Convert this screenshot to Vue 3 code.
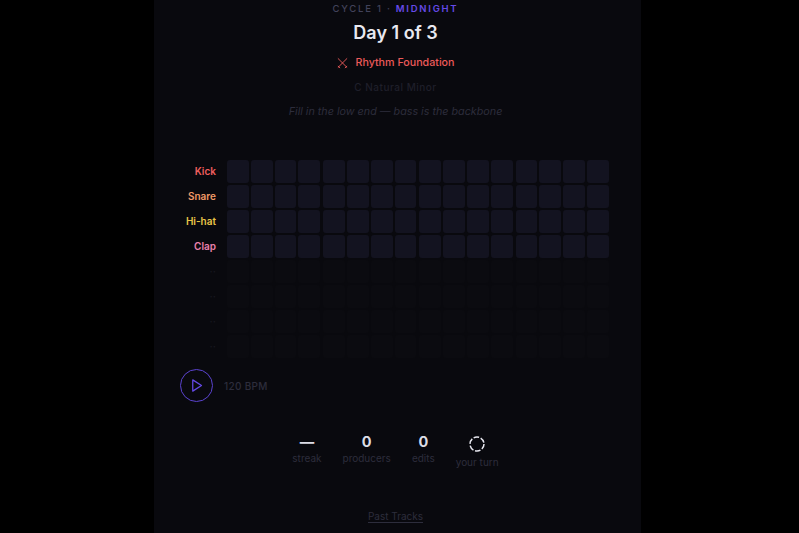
<script setup>
const steps = Array.from({ length: 16 }, (_, i) => i);

const tracks = [
  { name: 'Kick', color: '#ef5f5f', active: true },
  { name: 'Snare', color: '#ef9866', active: true },
  { name: 'Hi-hat', color: '#e8c548', active: true },
  { name: 'Clap', color: '#ea80ac', active: true },
  { name: '··', color: '#17171f', active: false },
  { name: '··', color: '#17171f', active: false },
  { name: '··', color: '#17171f', active: false },
  { name: '··', color: '#17171f', active: false }
];

const stats = [
  { value: '—', label: 'streak' },
  { value: '0', label: 'producers' },
  { value: '0', label: 'edits' }
];
</script>

<template>
  <div class="page">
    <main class="column">
      <!-- Header -->
      <div class="cycle">CYCLE 1 · <span class="cycle-name">MIDNIGHT</span></div>
      <h1 class="day">Day 1 of 3</h1>
      <div class="phase">
        <svg class="phase-icon" viewBox="0 0 24 24" fill="none" stroke="currentColor" stroke-linecap="round" stroke-linejoin="round">
          <path d="M4 3 L20 19" />
          <path d="M20 3 L4 19" />
          <path d="M17 20 L20 17" />
          <path d="M4 17 L7 20" />
        </svg>
        <span>Rhythm Foundation</span>
      </div>
      <div class="scale">C Natural Minor</div>
      <div class="hint">Fill in the low end — bass is the backbone</div>

      <!-- Sequencer -->
      <div class="sequencer">
        <div v-for="(track, r) in tracks" :key="r" :class="['track', { 'is-locked': !track.active }]">
          <span class="track-label" :style="{ color: track.color }">{{ track.name }}</span>
          <div class="cells">
            <div v-for="s in steps" :key="s" :class="['cell', { 'bar-start': s > 0 && s % 4 === 0 }]"></div>
          </div>
        </div>
      </div>

      <!-- Transport -->
      <div class="transport">
        <button class="play-btn">
          <svg class="play-icon" viewBox="0 0 24 24" fill="none" stroke="currentColor" stroke-width="2" stroke-linejoin="round">
            <path d="M6 3 L20 12 L6 21 Z" />
          </svg>
        </button>
        <span class="bpm">120 BPM</span>
      </div>

      <!-- Stats -->
      <div class="stats">
        <div v-for="stat in stats" :key="stat.label" class="stat">
          <span class="stat-value">{{ stat.value }}</span>
          <span class="stat-label">{{ stat.label }}</span>
        </div>
        <div class="stat">
          <svg class="turn-ring" viewBox="0 0 16 16" fill="none" stroke="currentColor" stroke-width="1.5">
            <circle cx="8" cy="8" r="7" stroke-dasharray="5.6 1.73" />
          </svg>
          <span class="stat-label">your turn</span>
        </div>
      </div>

      <a class="past-tracks">Past Tracks</a>
    </main>
  </div>
</template>

<style>
html, body {
  margin: 0;
  background: #000;
}
</style>

<style scoped>
.page {
  height: 533px;
  overflow: hidden;
  background: #000;
  font-family: Inter, "Liberation Sans", sans-serif;
}

.column {
  width: 487px;
  height: 533px;
  margin-left: 154px;
  padding-right: 4px;
  background: #09090e;
  display: flex;
  flex-direction: column;
  align-items: center;
  box-sizing: border-box;
}

.cycle {
  margin-top: 3px;
  font-size: 9.5px;
  line-height: 12px;
  font-weight: 500;
  letter-spacing: 1.75px;
  color: #42425a;
}

.cycle-name {
  color: #6549e8;
  font-weight: 600;
}

.day {
  margin: 6px 0 0;
  font-size: 18px;
  line-height: 24px;
  font-weight: 600;
  color: #e8e8f0;
}

.phase {
  margin-top: 11px;
  display: flex;
  align-items: center;
  gap: 6px;
  font-size: 10.7px;
  line-height: 14px;
  font-weight: 500;
  color: #ec5a5a;
}

.phase-icon {
  width: 13px;
  height: 13px;
  stroke-width: 1.7;
}

.scale {
  margin-top: 11px;
  font-size: 10px;
  line-height: 12px;
  font-weight: 500;
  letter-spacing: 0.5px;
  color: #1f1f2a;
}

.hint {
  margin-top: 12px;
  font-size: 10.75px;
  line-height: 14px;
  font-style: italic;
  color: #2d2d3c;
}

.sequencer {
  align-self: flex-start;
  margin-top: 41px;
  display: flex;
  flex-direction: column;
  gap: 2px;
}

.track {
  display: flex;
  align-items: center;
  gap: 11px;
}

.track-label {
  width: 62px;
  padding-bottom: 2px;
  text-align: right;
  font-size: 10px;
  font-weight: 600;
}

.cells {
  display: flex;
  gap: 2px;
}

.cell {
  width: 21.8px;
  height: 23px;
  border-radius: 3px;
  background: #131320;
}

.bar-start {
  margin-left: 1px;
}

.is-locked .cell {
  background: #0b0b10;
}

.transport {
  align-self: flex-start;
  margin: 11px 0 0 26px;
  display: flex;
  align-items: center;
  gap: 11px;
}

.play-btn {
  width: 33px;
  height: 33px;
  padding: 0;
  border: 1px solid #5b43cf;
  border-radius: 50%;
  background: transparent;
  color: #6549e8;
  display: flex;
  align-items: center;
  justify-content: center;
}

.play-icon {
  width: 15px;
  height: 15px;
}

.bpm {
  font-size: 10px;
  font-weight: 500;
  letter-spacing: 0.3px;
  color: #2d2d3c;
}

.stats {
  margin-top: 31px;
  display: flex;
  align-items: flex-start;
  gap: 21px;
}

.stat {
  display: flex;
  flex-direction: column;
  align-items: center;
}

.stat-value {
  font-size: 14.5px;
  line-height: 18px;
  font-weight: 700;
  color: #dcdce6;
}

.stat-label {
  margin-top: 1px;
  font-size: 10px;
  line-height: 13px;
  color: #2d2d3c;
}

.turn-ring {
  width: 16px;
  height: 16px;
  margin: 3px 0;
  color: #e8e8f0;
}

.past-tracks {
  margin-top: 41px;
  font-size: 10px;
  line-height: 12px;
  color: #2d2d3c;
  border-bottom: 1px solid #2d2d3c;
}
</style>
